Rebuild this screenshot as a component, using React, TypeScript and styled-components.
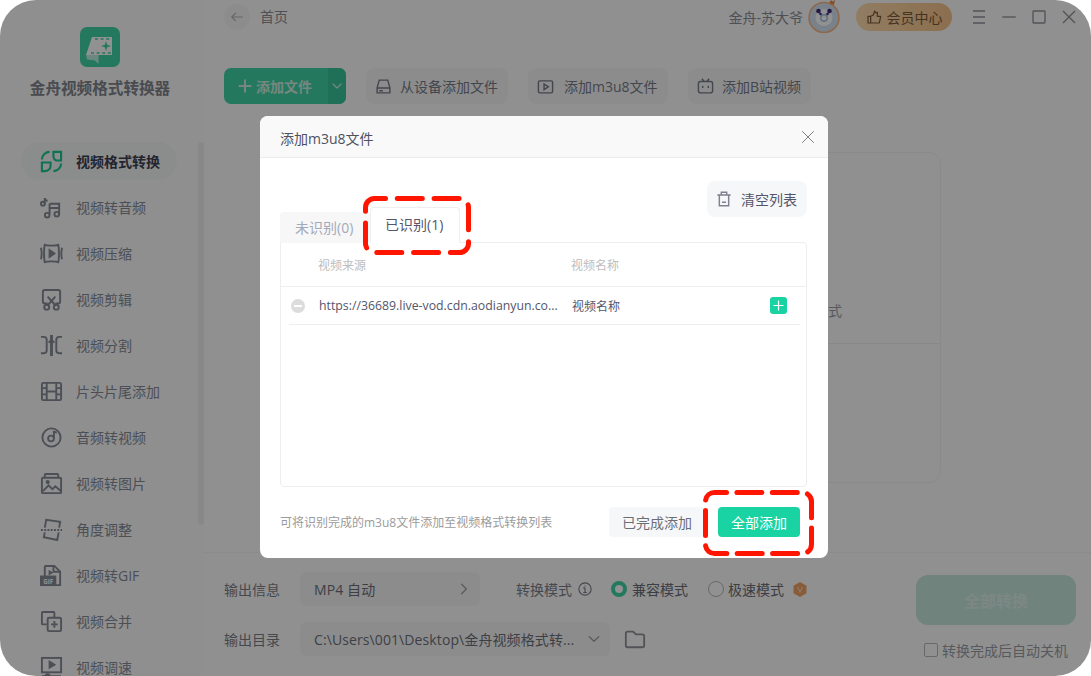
import React from "react";
import styled, { createGlobalStyle } from "styled-components";

const FONT = `"Open Sans", "Noto Sans CJK SC", "Noto Sans", sans-serif`;

const Global = createGlobalStyle`
  html, body { margin: 0; padding: 0; background: #fff; }
  body { font-family: ${FONT}; width: 1091px; height: 676px; overflow: hidden; }
  * { box-sizing: border-box; }
`;

const Shell = styled.div`
  position: relative;
  width: 1091px;
  height: 676px;
  border-radius: 36px;
  overflow: hidden;
  background: #fff;
  display: flex;
`;

/* ---------- sidebar ---------- */
const Side = styled.aside`
  width: 204px;
  height: 676px;
  flex: none;
  background: #fbfbfb;
  position: relative;
  overflow: hidden;
  display: flex;
  flex-direction: column;
  align-items: center;
  padding: 27px 4px 0 0;
`;
const AppTitle = styled.div`
  margin-top: 9px;
  width: 100%;
  text-align: center;
  font-size: 15.6px;
  line-height: 24px;
  font-weight: 700;
  color: #80848c;
  white-space: nowrap;
`;
const Nav = styled.nav`
  align-self: stretch;
  margin-top: 42px;
  padding-left: 21px;
  display: flex;
  flex-direction: column;
  gap: 8px;
`;
const NavRow = styled.div<{ $active?: boolean }>`
  width: 156px;
  height: 38px;
  flex: none;
  border-radius: 19px;
  padding-left: 19px;
  display: flex;
  align-items: center;
  gap: 13px;
  background: ${(p) => (p.$active ? "#f5f6f6" : "transparent")};
  color: ${(p) => (p.$active ? "#3e4152" : "#878b96")};
  font-size: 14px;
  font-weight: ${(p) => (p.$active ? 600 : 400)};
  white-space: nowrap;
  > svg { width: 23px; height: 23px; flex: none; }
`;
const ScrollThumb = styled.div`
  position: absolute;
  left: 198px;
  top: 142px;
  width: 6px;
  height: 383px;
  border-radius: 3px;
  background: #f0f0f0;
`;

/* ---------- main ---------- */
const Main = styled.main`
  flex: 1;
  min-width: 0;
  height: 676px;
  background: #fefefe;
  display: flex;
  flex-direction: column;
`;
const Header = styled.header`
  height: 36px;
  flex: none;
  padding: 4px 13px 0 20px;
  display: flex;
  align-items: flex-start;
`;
const BackCircle = styled.div`
  width: 26px;
  height: 26px;
  border-radius: 50%;
  background: #f6f7f7;
  display: flex;
  align-items: center;
  justify-content: center;
  color: #b0b3b8;
`;
const Crumb = styled.div`
  margin-left: 10px;
  font-size: 14px;
  line-height: 26px;
  color: #8b8e96;
`;
const Spacer = styled.div`
  flex: 1;
`;
const UserName = styled.div`
  font-size: 14px;
  line-height: 28px;
  color: #8b8e96;
  white-space: nowrap;
`;
const Avatar = styled.svg`
  width: 34px;
  height: 36px;
  margin: -4px 0 0 4px;
  flex: none;
`;
const VipPill = styled.div`
  width: 96px;
  height: 28px;
  margin: -1px 0 0 15px;
  border-radius: 14px;
  background: linear-gradient(90deg, #ffdcae, #f5c28a);
  color: #7a5a37;
  font-size: 14px;
  display: flex;
  align-items: center;
  justify-content: center;
  gap: 5px;
  > svg { width: 16px; height: 16px; }
`;
const WinBtns = styled.div`
  display: flex;
  align-items: center;
  height: 28px;
  margin: -1px 0 0 18px;
  gap: 12px;
  color: #8f939a;
  > svg { width: 18px; height: 18px; }
`;

const Toolbar = styled.div`
  height: 36px;
  margin-top: 32px;
  padding-left: 20px;
  display: flex;
  gap: 20px;
  flex: none;
`;
const AddBtn = styled.div`
  width: 122px;
  height: 36px;
  border-radius: 7px;
  background: #3fd4a4;
  overflow: hidden;
  display: flex;
  color: #cfeee3;
  font-size: 14px;
  font-weight: 700;
`;
const AddMain = styled.div`
  flex: 1;
  display: flex;
  align-items: center;
  padding-left: 14px;
  gap: 4px;
  > svg { width: 14px; height: 14px; }
`;
const AddArrow = styled.div`
  width: 18px;
  background: #37c597;
  display: flex;
  align-items: center;
  justify-content: center;
  > svg { width: 12px; height: 12px; }
`;
const ToolBtn = styled.div<{ $w: number; $gap: number }>`
  width: ${(p) => p.$w}px;
  height: 36px;
  border-radius: 8px;
  background: #f6f7f7;
  color: #787b8a;
  font-size: 14px;
  display: flex;
  align-items: center;
  padding-left: 9px;
  gap: ${(p) => p.$gap}px;
  white-space: nowrap;
  > svg { width: 17px; height: 17px; flex: none; }
`;
const Work = styled.div`
  flex: 1;
  padding: 48px 0 69px 137px;
  min-height: 0;
`;
const WorkCard = styled.div`
  width: 600px;
  height: 331px;
  border: 1px solid #f3f3f3;
  border-radius: 12px;
  display: flex;
  flex-direction: column;
`;
const CardTop = styled.div`
  height: 191px;
  border-bottom: 1px solid #efefef;
  padding: 148px 98px 0 0;
  text-align: right;
  font-size: 14px;
  line-height: 20px;
  color: #9a9da5;
`;

const Bottom = styled.section`
  height: 124px;
  flex: none;
  border-top: 1px solid #f5f5f5;
  padding: 19px 15px 0 20px;
  display: flex;
  background: #fefefe;
`;
const BottomLeft = styled.div`
  width: 692px;
  flex: none;
  display: flex;
  flex-direction: column;
  gap: 16px;
`;
const FormRow = styled.div`
  height: 34px;
  display: flex;
  align-items: center;
  font-size: 14px;
  color: #7c7f88;
  white-space: nowrap;
`;
const RowLabel = styled.div`
  width: 76px;
  flex: none;
`;
const Select = styled.div<{ $w: number }>`
  width: ${(p) => p.$w}px;
  height: 34px;
  flex: none;
  border-radius: 6px;
  background: #f6f7f7;
  padding: 0 9px 0 14px;
  display: flex;
  align-items: center;
  justify-content: space-between;
  color: #6d707a;
  letter-spacing: 0.1px;
  > svg { width: 14px; height: 14px; color: #a0a3aa; flex: none; }
`;
const ModeLabel = styled.div`
  margin-left: 36px;
  display: flex;
  align-items: center;
  gap: 6px;
  > svg { width: 14px; height: 14px; }
`;
const Radio = styled.div<{ $on?: boolean }>`
  width: 16px;
  height: 16px;
  border-radius: 50%;
  flex: none;
  margin-left: ${(p) => (p.$on ? 19 : 20)}px;
  margin-right: ${(p) => (p.$on ? 5 : 4)}px;
  border: ${(p) => (p.$on ? "4px solid #3fd4a4" : "1px solid #b5b7bb")};
  background: #fff;
`;
const ModeText = styled.div`
  color: #6a6d76;
`;
const Hex = styled.svg`
  width: 14px;
  height: 15px;
  margin-left: 9px;
  flex: none;
`;
const FolderIcon = styled.svg`
  width: 22px;
  height: 22px;
  margin-left: 14px;
  flex: none;
`;
const BottomRight = styled.div`
  flex: 1;
  display: flex;
  flex-direction: column;
  align-items: center;
  padding-top: 3px;
`;
const ConvertBtn = styled.div`
  width: 160px;
  height: 50px;
  border-radius: 12px;
  background: #c5e6dc;
  color: #dcf0ea;
  font-size: 16px;
  font-weight: 700;
  display: flex;
  align-items: center;
  justify-content: center;
`;
const Shutdown = styled.div`
  margin-top: 15px;
  display: flex;
  align-items: center;
  gap: 4px;
  font-size: 14px;
  color: #9a9da3;
  white-space: nowrap;
`;
const CheckBox = styled.div`
  width: 14px;
  height: 14px;
  border: 1px solid #b5b7bb;
  border-radius: 2px;
`;

/* ---------- overlay + dialog ---------- */
const Mask = styled.div`
  position: absolute;
  inset: 0;
  background: rgba(0, 0, 0, 0.43);
`;
const Dialog = styled.div`
  position: absolute;
  left: 260px;
  top: 116px;
  width: 568px;
  height: 442px;
  border-radius: 8px;
  background: #fff;
  overflow: hidden;
  display: flex;
  flex-direction: column;
`;
const DialogHead = styled.div`
  height: 42px;
  flex: none;
  background: #f9f9f9;
  border-bottom: 1px solid #ececec;
  padding: 2px 13px 0 20px;
  display: flex;
  align-items: center;
  justify-content: space-between;
  font-size: 14px;
  color: #4f5161;
  > svg { width: 14px; height: 14px; color: #7c7e85; margin-top: -2px; }
`;
const DialogBody = styled.div`
  flex: 1;
  padding: 23px 21px 0 20px;
  display: flex;
  flex-direction: column;
`;
const ClearRow = styled.div`
  display: flex;
  justify-content: flex-end;
  height: 36px;
  flex: none;
`;
const ClearBtn = styled.div`
  width: 100px;
  height: 36px;
  border-radius: 8px;
  background: #f6f7f9;
  display: flex;
  align-items: center;
  padding-left: 9px;
  gap: 9px;
  font-size: 14px;
  color: #54566b;
  > svg { width: 16px; height: 16px; }
`;
const Tabs = styled.div`
  display: flex;
  align-items: flex-end;
  height: 36px;
  margin-top: -10px;
  position: relative;
  z-index: 1;
  margin-bottom: -1px;
`;
const Tab = styled.div<{ $active?: boolean }>`
  width: 90px;
  height: ${(p) => (p.$active ? 36 : 31)}px;
  border: 1px solid ${(p) => (p.$active ? "#eeeeee" : "#f7f7f7")};
  border-bottom: ${(p) => (p.$active ? "1px solid #fff" : "none")};
  border-radius: 4px 4px 0 0;
  background: ${(p) => (p.$active ? "#fff" : "#f7f7f7")};
  color: ${(p) => (p.$active ? "#54566b" : "#a3a9ba")};
  font-size: 14px;
  padding-left: ${(p) => (p.$active ? 14 : 14)}px;
  line-height: ${(p) => (p.$active ? 34 : 30)}px;
  position: relative;
  white-space: nowrap;
`;
const Table = styled.div`
  height: 245px;
  flex: none;
  border: 1px solid #eeeeee;
  border-radius: 0 4px 4px 4px;
  display: flex;
  flex-direction: column;
`;
const TableHead = styled.div`
  height: 44px;
  flex: none;
  border-bottom: 1px solid #eeeeee;
  display: flex;
  align-items: center;
  font-size: 12px;
  color: #bdbdbd;
`;
const ColSource = styled.div`
  width: 290px;
  padding-left: 37px;
  flex: none;
`;
const TableRow = styled.div`
  height: 38px;
  flex: none;
  margin: 0 6px 0 8px;
  border-bottom: 1px solid #eeeeee;
  display: flex;
  align-items: center;
  font-size: 12px;
  color: #54566b;
`;
const MinusDot = styled.div`
  width: 14px;
  height: 14px;
  margin-left: 2px;
  border-radius: 50%;
  background: #dcdcdc;
  flex: none;
  display: flex;
  align-items: center;
  justify-content: center;
  &::before { content: ""; width: 8px; height: 2px; background: #fff; }
`;
const UrlCell = styled.div`
  width: 253px;
  margin-left: 14px;
  flex: none;
  font-size: 12.3px;
  white-space: nowrap;
`;
const NameCell = styled.div`
  flex: 1;
`;
const PlusBox = styled.div`
  width: 17px;
  height: 17px;
  margin-right: 13px;
  border-radius: 3px;
  background: #19d3a2;
  color: #fff;
  display: flex;
  align-items: center;
  justify-content: center;
  > svg { width: 11px; height: 11px; }
`;
const DialogFoot = styled.div`
  margin-top: 20px;
  height: 30px;
  display: flex;
  align-items: center;
  padding-right: 7px;
`;
const Hint = styled.div`
  flex: 1;
  font-size: 12px;
  color: #9b9b9b;
  white-space: nowrap;
`;
const FootBtn = styled.div<{ $primary?: boolean }>`
  position: relative;
  height: 30px;
  width: ${(p) => (p.$primary ? 82 : 96)}px;
  margin-left: ${(p) => (p.$primary ? 13 : 0)}px;
  border-radius: 4px;
  background: ${(p) => (p.$primary ? "#19d3a2" : "#f6f7f9")};
  color: ${(p) => (p.$primary ? "#fff" : "#6c6e75")};
  font-size: 14px;
  display: flex;
  align-items: center;
  justify-content: center;
  white-space: nowrap;
`;
const DashBox = styled.svg<{ $l: number; $t: number }>`
  position: absolute;
  left: ${(p) => p.$l}px;
  top: ${(p) => p.$t}px;
  overflow: visible;
  pointer-events: none;
`;

/* ---------- drawings ---------- */
const S = (p: React.SVGProps<SVGSVGElement>) => (
  <svg viewBox="0 0 24 24" fill="none" stroke="currentColor" strokeWidth={2} {...p} />
);

const navIcons: React.ReactNode[] = [
  <S key="0" stroke="#19c894" strokeWidth={2.2}>
    <path d="M2 10C2 5 6 2 10 2" />
    <path d="M2 13h9v4c0 3-3 5-6 5H2z" />
    <path d="M14 2h8v9h-4c-3 0-4-3-4-5z" />
    <path d="M22 14c0 5-4 8-8 8" />
  </S>,
  <S key="1">
    <circle cx="3" cy="8" r="2" />
    <path d="M5 8V2c0 2 2 3 3 3" />
    <path d="M10 8h10v11" />
    <path d="M10 8v11" />
    <path d="M10 12.500h10" />
    <circle cx="7.500" cy="20" r="2.400" />
    <circle cx="17.500" cy="19" r="2.400" />
  </S>,
  <S key="2">
    <path d="M5 3c2 1 12 1 14 0 1 3 1 15 0 18-2-1-12-1-14 0-1-3-1-15 0-18z" />
    <path d="M10 8.500v7l5-3.500z" fill="currentColor" />
    <path d="M1 6c1 4 1 8 0 12M23 6c-1 4-1 8 0 12" />
  </S>,
  <S key="3">
    <path d="M8 16H5a2 2 0 0 1-2-2V4a2 2 0 0 1 2-2h14a2 2 0 0 1 2 2v10a2 2 0 0 1-2 2h-3" />
    <circle cx="7" cy="20" r="2.600" />
    <circle cx="17" cy="20" r="2.600" />
    <path d="M8 18 16 9M16 18 8 9" />
  </S>,
  <S key="4">
    <path d="M1 3h3a3 3 0 0 1 3 3v11a3 3 0 0 1-3 3H1" />
    <path d="M23 3h-3a3 3 0 0 0-3 3v11a3 3 0 0 0 3 3h3" />
    <path d="M12 1v22" strokeWidth={3} />
    <path d="M9 9l3-3 3 3" />
  </S>,
  <S key="5">
    <rect x="2" y="3" width="20" height="18" rx="1.500" />
    <path d="M7 3v18M17 3v18M2 8.500h5M2 15h5M17 8.500h5M17 15h5M7 12h10" />
  </S>,
  <S key="6">
    <circle cx="12" cy="12" r="9.500" />
    <circle cx="11.500" cy="13" r="3" />
    <path d="M14.500 13V6c1 0 2 1 3 1" />
  </S>,
  <S key="7">
    <rect x="2" y="6" width="20" height="16" rx="1" />
    <path d="M5 6V3a1 1 0 0 1 1-1h12a1 1 0 0 1 1 1v3" />
    <path d="M3 20l6-6 4 4 3-3 6 5" />
    <circle cx="8" cy="10.500" r="1.200" fill="currentColor" />
  </S>,
  <S key="8">
    <path d="M5 10 6.500 2 21 4l-1 6" />
    <path d="M5 15l-1 5 14 3 1.500-8" />
    <path d="M1 12.500h22" strokeDasharray="2 1.400" />
  </S>,
  <S key="9">
    <path d="M5 13V3a1 1 0 0 1 1-1h9l6 6v14H8" />
    <path d="M14 2v6h7" />
    <path d="M9 6v6l5-3z" fill="currentColor" stroke="none" />
    <rect x="1" y="13" width="15" height="9" fill="currentColor" />
    <text x="8.500" y="20.500" fontSize="6.500" fontWeight="700" fill="#fff" stroke="none" textAnchor="middle">
      GIF
    </text>
  </S>,
  <S key="10">
    <path d="M15 8V3a1 1 0 0 0-1-1H3a1 1 0 0 0-1 1v11a1 1 0 0 0 1 1h4" />
    <rect x="8" y="8" width="14" height="14" rx="1.500" />
    <path d="M15 11.500v7M11.500 15h7" />
  </S>,
  <S key="11">
    <rect x="2" y="2" width="20" height="15" />
    <path d="M10 6v6l5-3z" fill="currentColor" />
    <path d="M2 21h20" />
    <circle cx="8" cy="21" r="2" fill="currentColor" />
  </S>,
];

const navItems = [
  "视频格式转换",
  "视频转音频",
  "视频压缩",
  "视频剪辑",
  "视频分割",
  "片头片尾添加",
  "音频转视频",
  "视频转图片",
  "角度调整",
  "视频转GIF",
  "视频合并",
  "视频调速",
];

const Chevron = ({ dir }: { dir: "right" | "down" }) => (
  <S strokeWidth={2.400} strokeLinecap="round" strokeLinejoin="round">
    <path d={dir === "right" ? "M8 4l8 8-8 8" : "M4 8l8 8 8-8"} />
  </S>
);

const Logo = () => (
  <svg width="40" height="40" viewBox="0 0 40 40" style={{ flex: "none" }}>
    <rect width="40" height="40" rx="7" fill="#3ed4a5" />
    <path d="M12 10h20v18H6z" fill="#fff" />
    <path d="M6 28h12.500v9L15 33.500l-8-1z" fill="#bdeee0" />
    <path d="M15 12h16M11 26h20" stroke="#3ed4a5" strokeWidth="1.600" strokeDasharray="3 2.600" />
    <path d="M26 14l1.200 3.800L31 19l-3.800 1.200L26 24l-1.200-3.800L21 19l3.800-1.200z" fill="#3ed4a5" />
  </svg>
);

const RedDash = ({ l, t, w, h, dash, offset }: { l: number; t: number; w: number; h: number; dash: string; offset: number }) => (
  <DashBox $l={l} $t={t} width={w} height={h} viewBox={`0 0 ${w} ${h}`}>
    <rect
      x="2.500"
      y="2.500"
      width={w - 5}
      height={h - 5}
      rx="9"
      fill="none"
      stroke="#ff1500"
      strokeWidth="5"
      strokeLinecap="round"
      strokeDasharray={dash}
      strokeDashoffset={offset}
    />
  </DashBox>
);

export default function App() {
  return (
    <>
      <Global />
      <Shell>
        <Side>
          <Logo />
          <AppTitle>金舟视频格式转换器</AppTitle>
          <Nav>
            {navItems.map((name, i) => (
              <NavRow key={name} $active={i === 0}>
                {navIcons[i]}
                {name}
              </NavRow>
            ))}
          </Nav>
          <ScrollThumb />
        </Side>
        <Main>
          <Header>
            <BackCircle>
              <svg width="14" height="14" viewBox="0 0 24 24" fill="none" stroke="currentColor" strokeWidth="2">
                <path d="M22 12H3M10 5l-7 7 7 7" />
              </svg>
            </BackCircle>
            <Crumb>首页</Crumb>
            <Spacer />
            <UserName>金舟-苏大爷</UserName>
            <Avatar viewBox="0 0 34 36">
              <circle cx="17" cy="17.500" r="15" fill="#d5e4f2" stroke="#f6b98a" strokeWidth="1.600" />
              <circle cx="17" cy="17.500" r="8.500" fill="#fff" />
              <circle cx="11.500" cy="11" r="2.300" fill="#3b2d7a" />
              <circle cx="22.500" cy="11" r="2.300" fill="#3b2d7a" />
              <circle cx="13.500" cy="14" r="1.300" fill="#3b2d7a" />
              <circle cx="20.500" cy="14" r="1.300" fill="#3b2d7a" />
              <circle cx="17" cy="18" r="3.200" fill="none" stroke="#9cc0e4" strokeWidth="1.400" />
              <path d="M22 3l2-3 1.500 1.500L28 0l-1 5z" fill="#f08a4b" />
            </Avatar>
            <VipPill>
              <S strokeWidth={1.800} strokeLinejoin="round">
                <path d="M3 11h4v10H3zM7 11l4-2 2-6 2 3 2-1v6h5l-2 10H7" />
              </S>
              会员中心
            </VipPill>
            <WinBtns>
              <S strokeWidth={1.800}>
                <path d="M4 4h16M4 12h16M4 20h16" />
              </S>
              <S strokeWidth={1.800}>
                <path d="M3 12h18" />
              </S>
              <S strokeWidth={1.800}>
                <rect x="4" y="4" width="16" height="16" rx="1" />
              </S>
              <S strokeWidth={1.800}>
                <path d="M4 4l16 16M20 4 4 20" />
              </S>
            </WinBtns>
          </Header>
          <Toolbar>
            <AddBtn>
              <AddMain>
                <S strokeWidth={3.500}>
                  <path d="M12 1v22M1 12h22" />
                </S>
                添加文件
              </AddMain>
              <AddArrow>
                <Chevron dir="down" />
              </AddArrow>
            </AddBtn>
            <ToolBtn $w={142} $gap={8}>
              <S>
                <path d="M6 3h12l3 11v7H3v-7zM3 14h18M6 18h5" />
              </S>
              从设备添加文件
            </ToolBtn>
            <ToolBtn $w={140} $gap={10}>
              <S>
                <rect x="2" y="4" width="20" height="17" rx="2" />
                <path d="M10 8.500v8l6-4z" />
              </S>
              添加m3u8文件
            </ToolBtn>
            <ToolBtn $w={123} $gap={8}>
              <S>
                <rect x="2" y="5" width="20" height="16" rx="3" />
                <path d="M7 1l3 4M17 1l-3 4M8 11v3M16 11v3" />
              </S>
              添加B站视频
            </ToolBtn>
          </Toolbar>
          <Work>
            <WorkCard>
              <CardTop>格式</CardTop>
            </WorkCard>
          </Work>
          <Bottom>
            <BottomLeft>
              <FormRow>
                <RowLabel>输出信息</RowLabel>
                <Select $w={180}>
                  MP4 自动
                  <Chevron dir="right" />
                </Select>
                <ModeLabel>
                  转换模式
                  <svg viewBox="0 0 24 24" fill="none" stroke="currentColor" strokeWidth="2">
                    <circle cx="12" cy="12" r="10.500" />
                    <path d="M12 10v8M9 18h6M9 10h3M12 6v1.500" />
                  </svg>
                </ModeLabel>
                <Radio $on />
                <ModeText>兼容模式</ModeText>
                <Radio />
                <ModeText>极速模式</ModeText>
                <Hex viewBox="0 0 14 15">
                  <path d="M7 0l6.500 3.700v7.600L7 15 .5 11.300V3.700z" fill="#f0a264" />
                  <path d="M4.500 5l2.500 5 2.500-5" fill="none" stroke="#f8d9bd" strokeWidth="1.100" />
                </Hex>
              </FormRow>
              <FormRow>
                <RowLabel>输出目录</RowLabel>
                <Select $w={310}>
                  C:\Users\001\Desktop\金舟视频格式转...
                  <Chevron dir="down" />
                </Select>
                <FolderIcon viewBox="0 0 24 24" fill="none" stroke="#8f9299" strokeWidth="2" strokeLinejoin="round">
                  <path d="M2 6a2 2 0 0 1 2-2h6l3 3h7a2 2 0 0 1 2 2v10a2 2 0 0 1-2 2H4a2 2 0 0 1-2-2z" />
                </FolderIcon>
              </FormRow>
            </BottomLeft>
            <BottomRight>
              <ConvertBtn>全部转换</ConvertBtn>
              <Shutdown>
                <CheckBox />
                转换完成后自动关机
              </Shutdown>
            </BottomRight>
          </Bottom>
        </Main>
        <Mask />
        <Dialog>
          <DialogHead>
            添加m3u8文件
            <S strokeWidth={1.700}>
              <path d="M2 2l20 20M22 2 2 22" />
            </S>
          </DialogHead>
          <DialogBody>
            <ClearRow>
              <ClearBtn>
                <S strokeWidth={2.200} stroke="#7f8091">
                  <path d="M2 6h20M8 6V2h8v4M5 6v16h14V6M9 17h6" />
                </S>
                清空列表
              </ClearBtn>
            </ClearRow>
            <Tabs>
              <Tab>未识别(0)</Tab>
              <Tab $active>
                已识别(1)
                <RedDash l={-8} t={-12} w={108} h={59} dash="25 11.800" offset={14} />
              </Tab>
            </Tabs>
            <Table>
              <TableHead>
                <ColSource>视频来源</ColSource>
                <div>视频名称</div>
              </TableHead>
              <TableRow>
                <MinusDot />
                <UrlCell>https://36689.live-vod.cdn.aodianyun.co...</UrlCell>
                <NameCell>视频名称</NameCell>
                <PlusBox>
                  <S strokeWidth={2.600}>
                    <path d="M12 1v22M1 12h22" />
                  </S>
                </PlusBox>
              </TableRow>
            </Table>
            <DialogFoot>
              <Hint>可将识别完成的m3u8文件添加至视频格式转换列表</Hint>
              <FootBtn>已完成添加</FootBtn>
              <FootBtn $primary>
                全部添加
                <RedDash l={-15} t={-17} w={111} h={66} dash="25 10.400" offset={13} />
              </FootBtn>
            </DialogFoot>
          </DialogBody>
        </Dialog>
      </Shell>
    </>
  );
}
